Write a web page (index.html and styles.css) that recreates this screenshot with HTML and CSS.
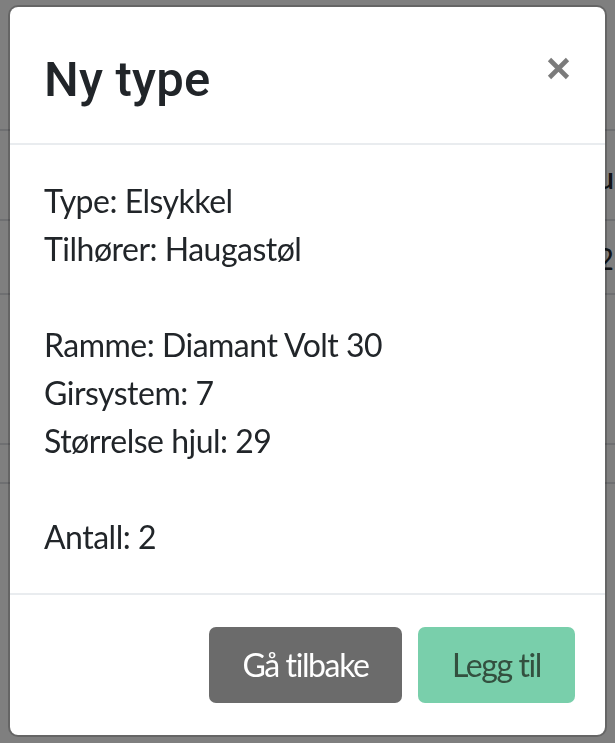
FILE: index.html
```html
<!DOCTYPE html>
<html lang="no">
<head>
<meta charset="utf-8">
<title>Ny type</title>
<link rel="stylesheet" href="styles.css">
</head>
<body>
<div class="page">
  <div class="row row-top"></div>
  <div class="row row-head"><span class="cell-text strong">u</span></div>
  <div class="row row-a"><span class="cell-text">2</span></div>
  <div class="row row-b"></div>
  <div class="row row-c"></div>
  <div class="row row-d"></div>
</div>
<div class="backdrop"></div>
<div class="modal" role="dialog" aria-labelledby="modal-title">
  <div class="modal-header">
    <h5 class="modal-title" id="modal-title">Ny type</h5>
    <button class="close" type="button" aria-label="Close">
      <svg width="23" height="23" viewBox="0 0 23 23" aria-hidden="true">
        <path d="M2.5 2.5 L20.5 20.5 M20.5 2.5 L2.5 20.5" stroke="#7b7b7b" stroke-width="4.6" stroke-linecap="butt" fill="none"/>
      </svg>
    </button>
  </div>
  <div class="modal-body">
    <p>Type: Elsykkel</p>
    <p>Tilhører: Haugastøl</p>
    <p class="blank">&nbsp;</p>
    <p>Ramme: Diamant Volt 30</p>
    <p>Girsystem: 7</p>
    <p>Størrelse hjul: 29</p>
    <p class="blank">&nbsp;</p>
    <p>Antall: 2</p>
  </div>
  <div class="modal-footer">
    <button class="btn btn-secondary" type="button">Gå tilbake</button>
    <button class="btn btn-success" type="button">Legg til</button>
  </div>
</div>
</body>
</html>
```
FILE: styles.css
```css
html, body {
  margin: 0;
  padding: 0;
  height: 100%;
  overflow: hidden;
}

body {
  background: #ffffff;
  font-family: "Lato", "Open Sans", sans-serif;
  color: #212529;
}

/* page behind the backdrop */
.page {
  display: flex;
  flex-direction: column;
}

.row {
  border-bottom: 2px solid #dcdfe3;
  display: flex;
  align-items: center;
  justify-content: flex-end;
  white-space: nowrap;
}

.row-top { height: 129px; }
.row-head { height: 88px; }
.row-a { height: 72px; }
.row-b { height: 148px; }
.row-c { height: 37px; }
.row-d { height: 0; border-bottom: none; }

.cell-text {
  font-size: 30px;
  line-height: 36px;
  color: #212529;
  padding-right: 1px;
}

.row-head .cell-text { padding-top: 4px; }
.row-a .cell-text { padding-top: 2px; }

.strong { font-weight: 600; }

.backdrop {
  position: fixed;
  inset: 0;
  background: rgba(0, 0, 0, 0.5);
}

/* modal */
.modal {
  position: absolute;
  left: 8px;
  top: 5px;
  width: 595px;
  height: 728px;
  background: #ffffff;
  border: 2px solid rgba(0, 0, 0, 0.2);
  border-radius: 10px;
  background-clip: padding-box;
  display: flex;
  flex-direction: column;
}

.modal-header {
  display: flex;
  justify-content: space-between;
  align-items: flex-start;
  padding: 44px 35px 0 34px;
  height: 92px;
  border-bottom: 2px solid #e9ecef;
}

.modal-title {
  margin: 0;
  font-family: "Roboto", "Liberation Sans", sans-serif;
  font-weight: 500;
  font-size: 49px;
  line-height: 58px;
  color: #212529;
  letter-spacing: 0.2px;
}

.close {
  margin-top: 6px;
  padding: 0;
  border: 0;
  background: transparent;
  width: 23px;
  height: 23px;
  display: block;
  cursor: pointer;
}

.close svg { display: block; }

.modal-body {
  padding: 32px 34px;
  font-size: 32px;
  line-height: 48px;
  letter-spacing: -0.5px;
  border-bottom: 2px solid #e9ecef;
}

.modal-body p {
  margin: 0;
  height: 48px;
}

.modal-footer {
  flex: 1;
  display: flex;
  justify-content: flex-end;
  align-items: flex-start;
  gap: 16px;
  padding: 32px 30px 0 0;
}

.btn {
  height: 76px;
  border: 0;
  border-radius: 7px;
  font-family: "Lato", "Open Sans", sans-serif;
  font-size: 32px;
  letter-spacing: -1.4px;
  padding: 0 0 2px;
  display: flex;
  align-items: center;
  justify-content: center;
  cursor: pointer;
}

.btn-secondary {
  width: 193px;
  background: #6b6b6b;
  color: #ffffff;
}

.btn-success {
  width: 157px;
  background: #79cfab;
  color: #33503f;
}
```
